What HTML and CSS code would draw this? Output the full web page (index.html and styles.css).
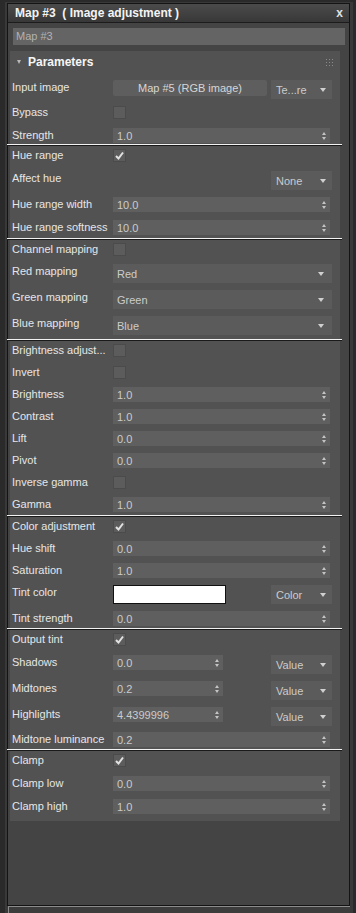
FILE: index.html
```html
<!DOCTYPE html>
<html lang="en">
<head>
    <meta charset="UTF-8">
    <meta name="viewport" content="width=device-width, initial-scale=1.0">
    <title>Map #3 - Image adjustment</title>
    <link rel="stylesheet" href="styles.css">
</head>
<body>
    <div class="frame">
        <div class="win">
            <div class="titlebar">
                <span class="title">Map #3&nbsp; ( Image adjustment )</span>
                <span class="close">x</span>
            </div>
            <div class="namefield">Map #3</div>

            <div class="rollout">
                <div class="rollout-head">
                    <span class="tri"></span>
                    <span class="rollout-title">Parameters</span>
                    <svg class="grip" width="7" height="7" viewBox="0 0 7 7">
                        <g fill="#8a8a8a">
                            <rect x="0" y="0" width="1" height="1"/><rect x="3" y="0" width="1" height="1"/><rect x="6" y="0" width="1" height="1"/>
                            <rect x="0" y="3" width="1" height="1"/><rect x="3" y="3" width="1" height="1"/><rect x="6" y="3" width="1" height="1"/>
                            <rect x="0" y="6" width="1" height="1"/><rect x="3" y="6" width="1" height="1"/><rect x="6" y="6" width="1" height="1"/>
                        </g>
                    </svg>
                </div>

                <div class="params">
                    <div class="row r25"><span class="lbl">Input image</span><span class="mapbtn">Map #5 (RGB image)</span><span class="dd short">Te...re</span></div>
                    <div class="row r23"><span class="lbl">Bypass</span><span class="chk"></span></div>
                    <div class="row r21"><span class="lbl">Strength</span><span class="spin">1.0<span class="updn"></span></span></div>
                    <div class="sep"></div>

                    <div class="row r23"><span class="lbl">Hue range</span><span class="chk on"><svg width="11" height="11" viewBox="0 0 11 11"><polyline points="2,6 4.5,8.5 9,2.5" fill="none" stroke="#e2e2e2" stroke-width="2"/></svg></span></div>
                    <div class="row tall"><span class="lbl">Affect hue</span><span class="dd short">None</span></div>
                    <div class="row r23"><span class="lbl">Hue range width</span><span class="spin">10.0<span class="updn"></span></span></div>
                    <div class="row r23"><span class="lbl">Hue range softness</span><span class="spin">10.0<span class="updn"></span></span></div>
                    <div class="sep"></div>

                    <div class="row"><span class="lbl">Channel mapping</span><span class="chk"></span></div>
                    <div class="row tall"><span class="lbl">Red mapping</span><span class="dd wide">Red</span></div>
                    <div class="row tall"><span class="lbl">Green mapping</span><span class="dd wide">Green</span></div>
                    <div class="row r28"><span class="lbl">Blue mapping</span><span class="dd wide">Blue</span></div>
                    <div class="sep"></div>

                    <div class="row"><span class="lbl">Brightness adjust...</span><span class="chk"></span></div>
                    <div class="row"><span class="lbl">Invert</span><span class="chk"></span></div>
                    <div class="row"><span class="lbl">Brightness</span><span class="spin">1.0<span class="updn"></span></span></div>
                    <div class="row"><span class="lbl">Contrast</span><span class="spin">1.0<span class="updn"></span></span></div>
                    <div class="row"><span class="lbl">Lift</span><span class="spin">0.0<span class="updn"></span></span></div>
                    <div class="row"><span class="lbl">Pivot</span><span class="spin">0.0<span class="updn"></span></span></div>
                    <div class="row"><span class="lbl">Inverse gamma</span><span class="chk"></span></div>
                    <div class="row r23"><span class="lbl">Gamma</span><span class="spin">1.0<span class="updn"></span></span></div>
                    <div class="sep"></div>

                    <div class="row"><span class="lbl">Color adjustment</span><span class="chk on"><svg width="11" height="11" viewBox="0 0 11 11"><polyline points="2,6 4.5,8.5 9,2.5" fill="none" stroke="#e2e2e2" stroke-width="2"/></svg></span></div>
                    <div class="row"><span class="lbl">Hue shift</span><span class="spin">0.0<span class="updn"></span></span></div>
                    <div class="row"><span class="lbl">Saturation</span><span class="spin">1.0<span class="updn"></span></span></div>
                    <div class="row tall"><span class="lbl">Tint color</span><span class="swatch"></span><span class="dd short">Color</span></div>
                    <div class="row"><span class="lbl">Tint strength</span><span class="spin">0.0<span class="updn"></span></span></div>
                    <div class="sep"></div>

                    <div class="row r23"><span class="lbl">Output tint</span><span class="chk on"><svg width="11" height="11" viewBox="0 0 11 11"><polyline points="2,6 4.5,8.5 9,2.5" fill="none" stroke="#e2e2e2" stroke-width="2"/></svg></span></div>
                    <div class="row tall"><span class="lbl">Shadows</span><span class="spin short">0.0<span class="updn"></span></span><span class="dd short">Value</span></div>
                    <div class="row tall"><span class="lbl">Midtones</span><span class="spin short">0.2<span class="updn"></span></span><span class="dd short">Value</span></div>
                    <div class="row r25"><span class="lbl">Highlights</span><span class="spin short">4.4399996<span class="updn"></span></span><span class="dd short">Value</span></div>
                    <div class="row"><span class="lbl">Midtone luminance</span><span class="spin">0.2<span class="updn"></span></span></div>
                    <div class="sep"></div>

                    <div class="row r23"><span class="lbl">Clamp</span><span class="chk on"><svg width="11" height="11" viewBox="0 0 11 11"><polyline points="2,6 4.5,8.5 9,2.5" fill="none" stroke="#e2e2e2" stroke-width="2"/></svg></span></div>
                    <div class="row r23"><span class="lbl">Clamp low</span><span class="spin">0.0<span class="updn"></span></span></div>
                    <div class="row"><span class="lbl">Clamp high</span><span class="spin">1.0<span class="updn"></span></span></div>
                </div>
            </div>
        </div>
        <div class="next"></div>
    </div>
</body>
</html>
```

FILE: styles.css
```css
body {
    margin: 0;
    background-color: #2a2a2a;
    font-family: "Liberation Sans", Arial, sans-serif;
    font-size: 11px;
    color: #e6e6e6;
}
.frame {
    margin: 2px 0 0 5px;
    width: 348px;
    padding: 1px 3px 5px 2px;
    box-sizing: border-box;
    background-color: #393939;
}
.win {
    border: 1px solid #141414;
    background-color: #444;
}
.titlebar {
    height: 18px;
    display: flex;
    align-items: center;
    padding: 0 6px 0 7px;
    border-bottom: 1px solid #1c1c1c;
    background: linear-gradient(#4b4b4b, #383838);
}
.title {
    font-weight: bold;
    font-size: 12px;
    color: #f4f4f4;
    white-space: nowrap;
}
.close {
    margin-left: auto;
    font-weight: bold;
    font-size: 12px;
    color: #e0e0e0;
}
.namefield {
    margin: 5px 4px 0 5px;
    height: 17px;
    line-height: 17px;
    padding-left: 3px;
    background-color: #646464;
    color: #b2b2b2;
}
.rollout {
    margin: 6px 9px 84px 2px;
    background-color: #525252;
}
.rollout-head {
    height: 22px;
    display: flex;
    align-items: center;
    padding: 0 7px 0 7px;
}
.tri {
    width: 0;
    height: 0;
    border-left: 2.5px solid transparent;
    border-right: 2.5px solid transparent;
    border-top: 4px solid #b8b8b8;
    margin-right: 7px;
}
.rollout-title {
    font-weight: bold;
    font-size: 12px;
    color: #f6f6f6;
}
.grip {
    margin-left: auto;
}
.params {
    padding-top: 7px;
}
.row {
    display: flex;
    align-items: flex-start;
    height: 22px;
    padding: 0 8px 0 2px;
}
.r21 { height: 21px; }
.r23 { height: 23px; }
.r25 { height: 25px; }
.tall { height: 26px; }
.r28 { height: 28px; }
.lbl {
    width: 101px;
    flex: none;
    line-height: 15px;
    white-space: nowrap;
    overflow: hidden;
}
.spin {
    width: 217px;
    height: 15px;
    box-sizing: border-box;
    display: flex;
    align-items: center;
    padding: 0 4px 0 4px;
    background-color: #5f5f5f;
    color: #cbcbcb;
}
.spin.short {
    width: 110px;
}
.updn {
    margin-left: auto;
    display: flex;
    flex-direction: column;
    gap: 2px;
}
.updn::before,
.updn::after {
    content: "";
    width: 0;
    height: 0;
    border-left: 2.5px solid transparent;
    border-right: 2.5px solid transparent;
}
.updn::before {
    border-bottom: 3px solid #c4c4c4;
}
.updn::after {
    border-top: 3px solid #c4c4c4;
}
.dd {
    height: 19px;
    box-sizing: border-box;
    display: flex;
    align-items: center;
    padding: 1px 6px 0 4px;
    background-color: #5b5b5b;
    color: #cbcbcb;
}
.dd::after {
    content: "";
    margin-left: auto;
    width: 0;
    height: 0;
    border-left: 3px solid transparent;
    border-right: 3px solid transparent;
    border-top: 4px solid #d0d0d0;
}
.dd.wide {
    width: 221px;
    padding-right: 8px;
}
.dd.short {
    width: 61px;
    margin-left: auto;
    padding-left: 5px;
}
.mapbtn {
    width: 154px;
    height: 16px;
    line-height: 16px;
    text-align: center;
    border-radius: 2px;
    background-color: #5e5e5e;
    color: #d6d6d6;
}
.chk {
    width: 13px;
    height: 13px;
    margin-top: 1px;
    box-sizing: border-box;
    display: flex;
    align-items: center;
    justify-content: center;
    background-color: #5c5c5c;
    border: 1px solid #4b4b4b;
}
.swatch {
    width: 113px;
    height: 19px;
    box-sizing: border-box;
    background-color: #fff;
    border: 1px solid #111;
}
.sep {
    height: 1px;
    margin: -5px -2px 2px -3px;
    background-color: #f2f2f2;
    border-bottom: 1px solid #1a1a1a;
    position: relative;
}
.next {
    margin-left: 1px;
    height: 10px;
    border-top: 1px solid #8c8c8c;
    border-left: 1px solid #8c8c8c;
    background-color: #3c3c3c;
}
```
